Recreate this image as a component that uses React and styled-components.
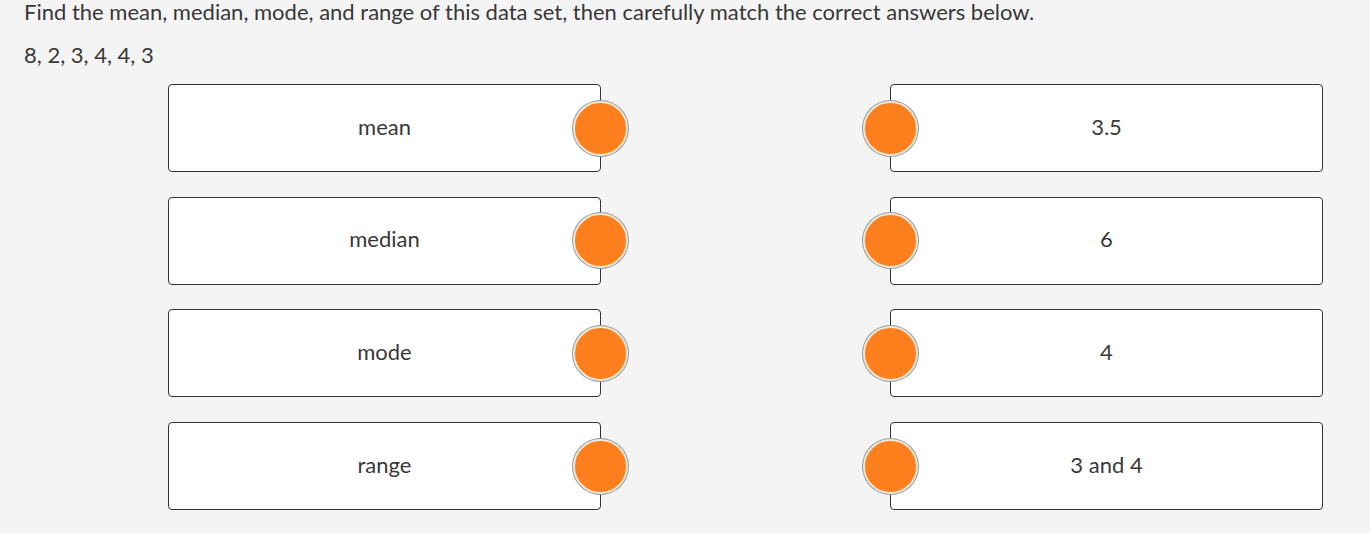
import React from "react";
import styled, { createGlobalStyle } from "styled-components";

const Global = createGlobalStyle`
  html, body { margin: 0; padding: 0; background: #f4f4f4; }
  body { font-family: Lato, "Open Sans", sans-serif; color: #333; }
`;

const Page = styled.div`
  width: 1370px;
  height: 533px;
  background: #f4f4f4;
  overflow: hidden;
`;

const Prompt = styled.p`
  margin: 0;
  padding-left: 24px;
  font-size: 22px;
  line-height: 24px;
  color: #383838;
`;

const Data = styled(Prompt)`
  margin-top: 19px;
`;

const Board = styled.div`
  display: flex;
  flex-direction: column;
  gap: 24.7px;
  margin-top: 17px;
  padding: 0 47px 0 168px;
`;

const Row = styled.div`
  display: flex;
  justify-content: space-between;
`;

const Card = styled.div`
  position: relative;
  box-sizing: border-box;
  width: 433px;
  height: 88px;
  padding-bottom: 4px;
  background: #fff;
  border: 1px solid #333;
  border-radius: 4px;
  display: flex;
  align-items: center;
  justify-content: center;
  font-size: 22px;
  color: #383838;
`;

const Dot = styled.span`
  position: absolute;
  top: 50%;
  ${(p) => (p.side === "right" ? "right: -28px;" : "left: -28px;")}
  width: 55px;
  height: 55px;
  margin-top: -27.5px;
  box-sizing: border-box;
  border-radius: 50%;
  background: #fd7f1e;
  border: 2px solid #f6e6d0;
  box-shadow: 0 0 0 1px #8e9ca8;
`;

const pairs = [
  ["mean", "3.5"],
  ["median", "6"],
  ["mode", "4"],
  ["range", "3 and 4"],
];

export default function App() {
  return (
    <Page>
      <Global />
      <Prompt>
        Find the mean, median, mode, and range of this data set, then carefully match the correct answers below.
      </Prompt>
      <Data>8, 2, 3, 4, 4, 3</Data>
      <Board>
        {pairs.map(([l, r]) => (
          <Row key={l}>
            <Card>
              {l}
              <Dot side="right" />
            </Card>
            <Card>
              <Dot side="left" />
              {r}
            </Card>
          </Row>
        ))}
      </Board>
    </Page>
  );
}
